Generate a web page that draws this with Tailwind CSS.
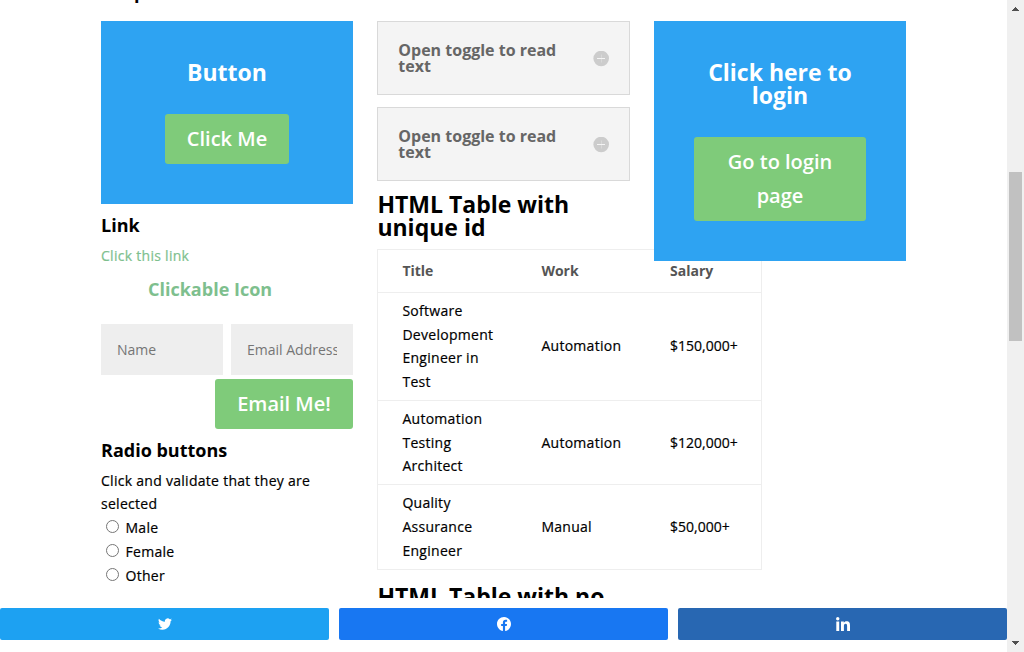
<!DOCTYPE html>
<html lang="en">
<head>
<meta charset="utf-8">
<title>Simple Controls</title>
<script src="https://cdn.jsdelivr.net/npm/@tailwindcss/browser@4"></script>
</head>
<body class="w-[1024px] h-[652px] overflow-hidden bg-white flex font-['Open_Sans',sans-serif] text-[14px] leading-[23.8px] font-medium text-black">
<div class="w-[1007px] h-[652px] flex flex-col">
  <main class="h-[598px] overflow-hidden shrink-0">
    <div class="h-[21px] overflow-hidden pl-[101px]"><h4 class="-mt-[17px] text-[18px] leading-[18px] font-bold">Simple</h4></div>
    <div class="flex items-start gap-6 pl-[101px]">
      <section class="w-[252px] shrink-0">
        <div class="bg-[#2ea3f2] p-10 h-[183px] text-center text-white">
          <h2 class="text-[23px] leading-[23px] font-bold">Button</h2>
          <a class="mt-[30px] inline-block h-[50px] w-[124px] py-2 rounded-[3px] bg-[#7fcb7a] text-[20px] leading-[34px] font-semibold">Click Me</a>
        </div>
        <h4 class="mt-3 text-[18px] leading-[18px] font-bold">Link</h4>
        <p class="mt-[10px] text-[#7ebf8e] tracking-[0.28px] [-webkit-text-stroke:0.2px]">Click this link</p>
        <h4 class="mt-[12px] pl-[47px] text-[18px] leading-[18px] font-bold text-[#7ebf8e]">Clickable Icon</h4>
        <div class="mt-[26.2px] flex gap-2 font-normal text-[#757575] leading-[51px]">
          <div class="w-[122px] h-[51px] bg-[#eee] px-4"><div class="overflow-hidden whitespace-nowrap">Name</div></div>
          <div class="w-[122px] h-[51px] bg-[#eee] px-4"><div class="overflow-hidden whitespace-nowrap">Email Address</div></div>
        </div>
        <div class="mt-1 flex justify-end"><a class="h-[50px] w-[138px] py-2 rounded-[3px] bg-[#7fcb7a] text-center text-white text-[20px] leading-[34px] font-semibold">Email Me!</a></div>
        <h4 class="mt-3 text-[18px] leading-[18px] font-bold">Radio buttons</h4>
        <p class="mt-[10px] h-[47px] leading-[23.4px] tracking-[0.28px] [-webkit-text-stroke:0.2px]">Click and validate that they are selected</p>
        <div class="pl-[5px] tracking-[0.28px]">
          <div class="flex h-6 items-start [-webkit-text-stroke:0.2px]"><span class="mt-[4px] mr-[6.5px] size-[13px] rounded-full border border-[#767676]"></span>Male</div>
          <div class="flex h-6 items-start [-webkit-text-stroke:0.2px]"><span class="mt-[4px] mr-[6.5px] size-[13px] rounded-full border border-[#767676]"></span>Female</div>
          <div class="flex h-6 items-start [-webkit-text-stroke:0.2px]"><span class="mt-[4px] mr-[6.5px] size-[13px] rounded-full border border-[#767676]"></span>Other</div>
        </div>
      </section>
      <section class="w-[253px] shrink-0">
        <div class="flex h-[74px] items-center justify-between border border-[#d9d9d9] bg-[#f4f4f4] pl-[20.3px] pr-5">
          <h5 class="w-[170px] text-[16px] leading-[16px] font-bold text-[#666]">Open toggle to read text</h5>
          <svg class="mt-px size-4" viewBox="0 0 16 16"><circle cx="8.2" cy="7.5" r="7.8" fill="#ccc"/><path d="M4 7.500h8" stroke="#f4f4f4"/><path d="M8.500 3.500v8" stroke="#f4f4f4" stroke-opacity=".3"/></svg>
        </div>
        <div class="mt-3 flex h-[74px] items-center justify-between border border-[#d9d9d9] bg-[#f4f4f4] pl-[20.3px] pr-5">
          <h5 class="w-[170px] text-[16px] leading-[16px] font-bold text-[#666]">Open toggle to read text</h5>
          <svg class="mt-px size-4" viewBox="0 0 16 16"><circle cx="8.2" cy="7.5" r="7.8" fill="#ccc"/><path d="M4 7.500h8" stroke="#f4f4f4"/><path d="M8.500 3.500v8" stroke="#f4f4f4" stroke-opacity=".3"/></svg>
        </div>
        <h2 class="mt-3 pl-[0.4px] text-[23px] leading-[23px] font-bold">HTML Table with unique id</h2>
        <div class="mt-[10px] w-[385px] border border-[#eee]">
          <div class="grid grid-cols-[139px_129px_115px] h-[43px] items-center border-b border-[#eee] font-bold text-[#555]"><div class="pl-[24.4px]">Title</div><div class="pl-[24.4px]">Work</div><div class="pl-6">Salary</div></div>
          <div class="grid grid-cols-[139px_129px_115px] h-[108px] pb-px items-center border-b border-[#eee] [-webkit-text-stroke:0.2px]"><div class="pl-[24.4px] pt-[0.6px] pr-5 leading-[23.7px] tracking-[0.28px]">Software Development Engineer in Test</div><div class="pl-[24.4px] tracking-[0.28px]">Automation</div><div class="pl-6">$150,000+</div></div>
          <div class="grid grid-cols-[139px_129px_115px] h-[84px] items-center border-b border-[#eee] [-webkit-text-stroke:0.2px]"><div class="pl-[24.4px] pr-5 tracking-[0.28px]">Automation Testing Architect</div><div class="pl-[24.4px] tracking-[0.28px]">Automation</div><div class="pl-6">$120,000+</div></div>
          <div class="grid grid-cols-[139px_129px_115px] h-[84px] items-center [-webkit-text-stroke:0.2px]"><div class="pl-[24.4px] pr-5 tracking-[0.28px]">Quality Assurance Engineer</div><div class="pl-[24.4px] tracking-[0.28px]">Manual</div><div class="pl-6">$50,000+</div></div>
        </div>
        <h2 class="mt-[15px] pl-[0.4px] text-[23px] leading-[23px] font-bold">HTML Table with no</h2>
      </section>
      <section class="relative w-[252px] shrink-0 bg-[#2ea3f2] p-10 h-[240px] text-center text-white">
        <h2 class="text-[23px] leading-[23px] font-bold">Click here to login</h2>
        <a class="mt-[30px] block h-[84px] px-[22px] py-2 rounded-[3px] bg-[#7fcb7a] text-[20px] leading-[34px] font-semibold">Go to login page</a>
      </section>
    </div>
  </main>
  <footer class="mt-[10px] grid grid-cols-3 gap-[10px] h-8 text-white">
    <a class="flex items-center justify-center rounded-[2px] bg-[#1da1f2]"><svg class="w-[14px] h-[14px]" viewBox="0 0 24 24" fill="currentColor"><path d="M23.95 4.57a10 10 0 0 1-2.82.77 4.96 4.96 0 0 0 2.16-2.72c-.95.55-2 .96-3.13 1.18a4.92 4.92 0 0 0-8.38 4.48C7.69 8.1 4.07 6.13 1.64 3.16a4.9 4.9 0 0 0-.67 2.48c0 1.7.87 3.2 2.19 4.1a4.9 4.9 0 0 1-2.23-.62v.06a4.92 4.92 0 0 0 3.95 4.83 5 5 0 0 1-2.21.08 4.94 4.94 0 0 0 4.6 3.42A9.87 9.87 0 0 1 0 19.54a14 14 0 0 0 7.55 2.21c9.05 0 14-7.5 14-13.98 0-.21 0-.42-.02-.63a10 10 0 0 0 2.42-2.57z"/></svg></a>
    <a class="flex items-center justify-center rounded-[2px] bg-[#1877f2]"><svg class="w-[14px] h-[14px]" viewBox="0 0 24 24" fill="currentColor"><path d="M24 12.07C24 5.4 18.63 0 12 0S0 5.4 0 12.07C0 18.1 4.39 23.1 10.13 24v-8.44H7.08v-3.49h3.05V9.41c0-3.02 1.79-4.69 4.53-4.69 1.31 0 2.68.24 2.68.24v2.97h-1.51c-1.49 0-1.96.93-1.96 1.89v2.25h3.33l-.53 3.49h-2.8V24C19.61 23.1 24 18.1 24 12.07z"/></svg></a>
    <a class="flex items-center justify-center rounded-[2px] bg-[#2867b2]"><svg class="w-[14px] h-[14px]" viewBox="0 0 14 14" fill="currentColor"><circle cx="1.75" cy="1.7" r="1.7"/><path d="M.3 4.5h2.9V14H.3zM5 4.5h2.8v1.3c.5-.9 1.5-1.6 2.8-1.6 2.8 0 3.4 1.8 3.4 4.4V14h-2.9V9.2c0-1.3-.1-2.5-1.5-2.5S7.9 7.900 7.900 9.200V14H5z"/></svg></a>
  </footer>
</div>
<aside class="flex w-[17px] h-[652px] flex-col items-center bg-[#f0f0f0]">
  <svg class="h-[17px] w-[17px]" viewBox="0 0 17 17" shape-rendering="crispEdges" fill="#505050"><path d="M8 7h1v1h1v1h1v1h1v1H5v-1h1V9h1V8h1z"/></svg>
  <div class="mt-[155px] h-[169px] w-[13px] bg-[#c1c1c1]"></div>
  <svg class="mt-auto h-[17px] w-[17px]" viewBox="0 0 17 17" shape-rendering="crispEdges" fill="#505050"><path d="M5 6h7v1h-1v1h-1v1H9v1H8V9H7V8H6V7H5z"/></svg>
</aside>
</body>
</html>
